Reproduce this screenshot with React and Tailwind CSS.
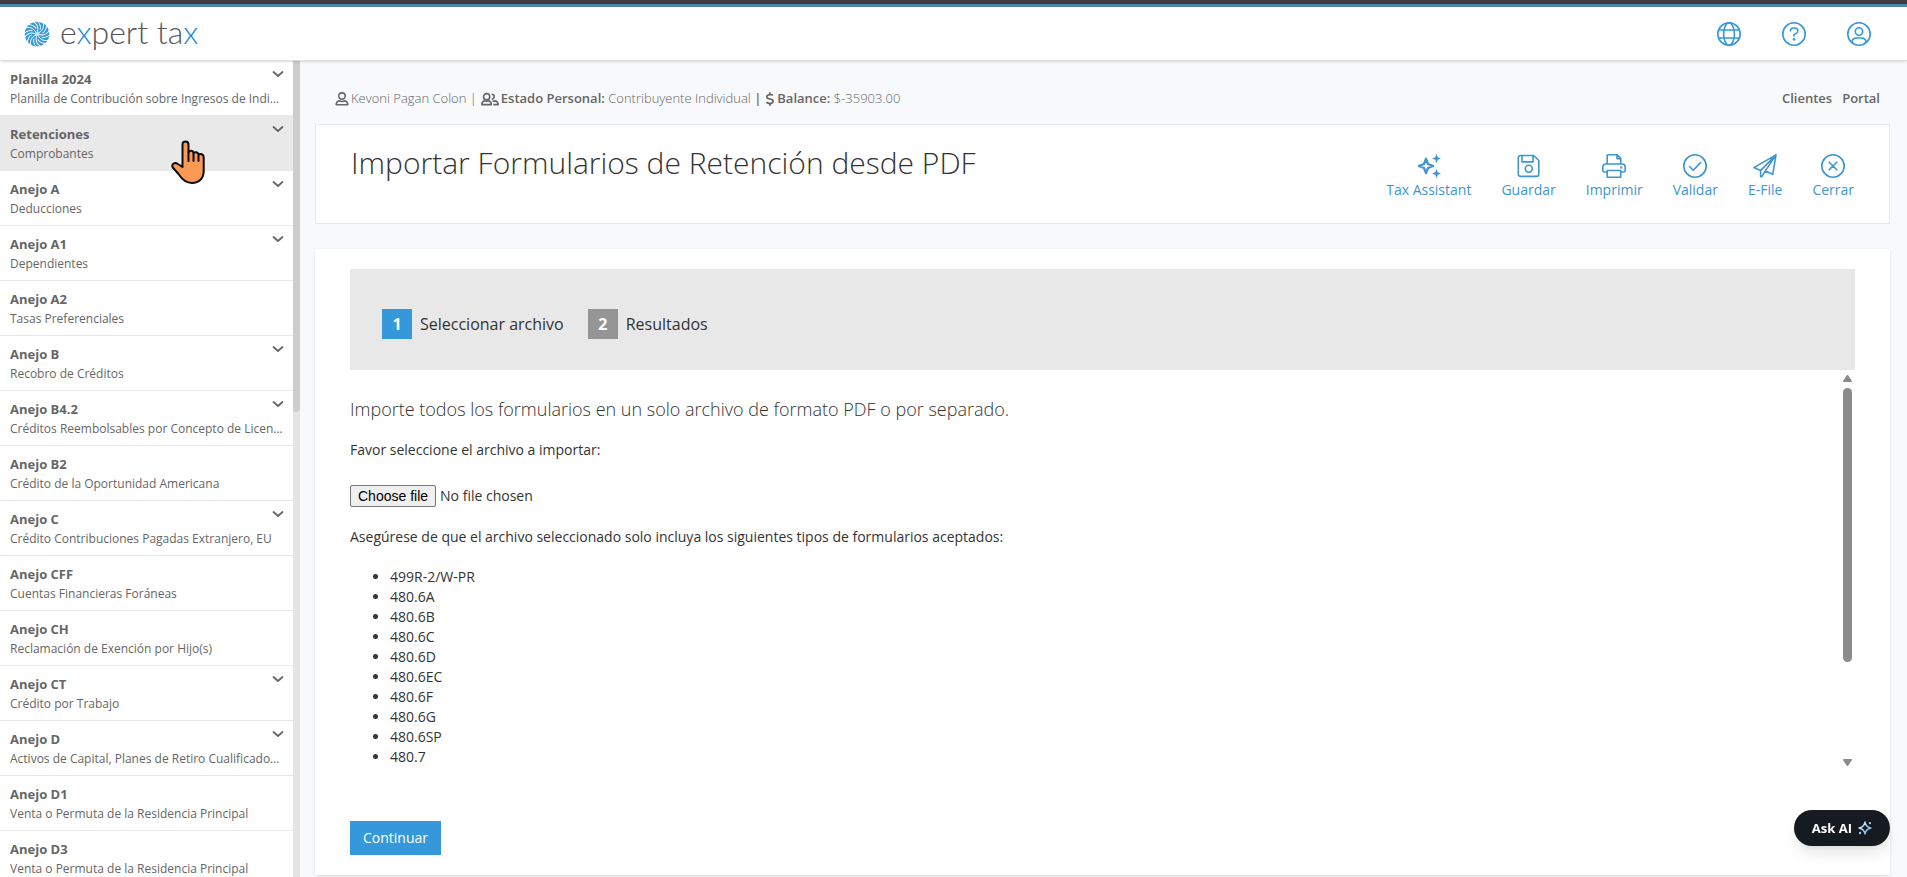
import React from "react";
import { FaDollarSign } from "react-icons/fa6";

const forms = [
  ["Planilla 2024", "Planilla de Contribución sobre Ingresos de Individuos", true],
  ["Retenciones", "Comprobantes", true],
  ["Anejo A", "Deducciones", true],
  ["Anejo A1", "Dependientes", true],
  ["Anejo A2", "Tasas Preferenciales", false],
  ["Anejo B", "Recobro de Créditos", true],
  ["Anejo B4.2", "Créditos Reembolsables por Concepto de Licencias", true],
  ["Anejo B2", "Crédito de la Oportunidad Americana", false],
  ["Anejo C", "Crédito Contribuciones Pagadas Extranjero, EU", true],
  ["Anejo CFF", "Cuentas Financieras Foráneas", false],
  ["Anejo CH", "Reclamación de Exención por Hijo(s)", false],
  ["Anejo CT", "Crédito por Trabajo", true],
  ["Anejo D", "Activos de Capital, Planes de Retiro Cualificados y otros", true],
  ["Anejo D1", "Venta o Permuta de la Residencia Principal", false],
  ["Anejo D3", "Venta o Permuta de la Residencia Principal", false],
];

const accepted = [
  "499R-2/W-PR", "480.6A", "480.6B", "480.6C", "480.6D",
  "480.6EC", "480.6F", "480.6G", "480.6SP", "480.7",
];

function Icon({ children, className = "size-6", width = 1.6 }) {
  return (
    <svg viewBox="0 0 24 24" className={className} fill="none" stroke="currentColor" strokeWidth={width} strokeLinecap="round" strokeLinejoin="round" aria-hidden="true">
      {children}
    </svg>
  );
}

const Globe = () => (
  <Icon>
    <circle cx="12" cy="12" r="11.2" />
    <ellipse cx="12" cy="12" rx="5.4" ry="11.2" />
    <path d="M1.8 8h20.4M1.8 16h20.4" />
  </Icon>
);
const Help = () => (
  <Icon>
    <circle cx="12" cy="12" r="11.2" />
    <path d="M8.3 8.800c.2-1.800 1.300-2.800 2.900-2.800h1.500c1.800 0 3.100 1.300 3.100 2.900 0 1.100-.5 1.900-1.500 2.500L12 12.700v1.300" />
    <circle cx="12" cy="17.300" r=".6" fill="currentColor" />
  </Icon>
);
const User = () => (
  <Icon>
    <circle cx="12" cy="12" r="11.2" />
    <circle cx="12" cy="9.500" r="3.700" />
    <path d="M4.800 20.300c.3-2.800 2.300-4.300 4.900-4.300h4.600c2.600 0 4.600 1.500 4.900 4.300" />
  </Icon>
);
const Sparkles = () => (
  <Icon width={2.3}>
    <path d="M9 4.800l2 5.200 5.200 2-5.200 2-2 5.200L7 14l-5.200-2L7 10z" />
    <path d="M19.500 0l1.300 3.200L24 4.500l-3.200 1.300L19.500 9l-1.300-3.200L15 4.500l3.200-1.300zM19.500 15l1.300 3.200 3.200 1.300-3.200 1.300-1.300 3.200-1.300-3.200-3.200-1.300 3.200-1.300z" fill="currentColor" stroke="none" />
  </Icon>
);
const Save = () => (
  <Icon>
    <path d="M3.500 1.500h13.200l5.100 5v13.700a2.200 2.200 0 0 1-2.200 2.200H3.500a2.200 2.200 0 0 1-2.200-2.200V3.700a2.200 2.200 0 0 1 2.200-2.200zM5 1.500v6.400h11V1.500" />
    <circle cx="11.800" cy="14.800" r="3.500" />
  </Icon>
);
const Print = () => (
  <Icon>
    <path d="M5.200 10V1.500A.8.8 0 0 1 6 .8h9.200l3.600 3.600V10M15 .8v3.800h3.800M5.200 18H2.400A1.600 1.600 0 0 1 .8 16.400V13a3 3 0 0 1 3-3h16.400a3 3 0 0 1 3 3v3.400a1.600 1.600 0 0 1-1.600 1.600h-2.800M5.200 16.500h13.600v6.700H5.200z" />
    <circle cx="19.300" cy="13.500" r=".4" fill="currentColor" />
  </Icon>
);
const Check = () => (
  <Icon>
    <circle cx="12" cy="12" r="11.2" />
    <path d="M6.500 12.500l3.800 3.700 7.200-7.600" />
  </Icon>
);
const Send = () => (
  <Icon>
    <path d="M23 .9L.9 13.600l6.700 3L23 .9l-3.300 19.400-7.500-3.200-3.600 5.800-1-.5v-5.800M23 .9L12.200 17.100" />
  </Icon>
);
const Close = () => (
  <Icon>
    <circle cx="12" cy="12" r="11.2" />
    <path d="M8.200 8.200l7.600 7.600M15.800 8.200l-7.600 7.600" />
  </Icon>
);

const actions = [
  ["Tax Assistant", Sparkles],
  ["Guardar", Save],
  ["Imprimir", Print],
  ["Validar", Check],
  ["E-File", Send],
  ["Cerrar", Close],
];

function AskSparkle() {
  return (
    <svg viewBox="0 0 24 24" className="size-3.5" fill="none" stroke="url(#ask-shade)" strokeWidth="2.4" strokeLinejoin="round" aria-hidden="true">
      <defs>
        <linearGradient id="ask-shade" x1="0" y1="0" x2="1" y2="1">
          <stop offset="0" stopColor="#f4f9ff" />
          <stop offset="1" stopColor="#5aa9f2" />
        </linearGradient>
      </defs>
      <path d="M12 1.800c1 6 3.200 8.700 10.200 10.200-7 1.500-9.200 4.200-10.200 10.200-1-6-3.200-8.700-10.200-10.200C8.800 10.500 11 7.800 12 1.800z" />
      <circle cx="20.500" cy="3.500" r="2" fill="#a9c4dd" stroke="none" />
      <circle cx="3.500" cy="20.500" r="2" fill="#a9c4dd" stroke="none" />
    </svg>
  );
}

function Logo() {
  const arms = Array.from({ length: 8 }, (_, i) => i * 45);
  return (
    <a href="#inicio" aria-label="expert tax" className="flex items-center gap-2.5">
      <svg viewBox="-13 -13 26 26" className="size-[26px]" fill="none" aria-hidden="true">
        <circle r="12.300" fill="#3498db" />
        {arms.map((a) => (
          <g key={a} transform={`rotate(${a})`} stroke="#ffffff" strokeWidth="1">
            <path d="M0 -.8C4 -1.500 8 -5.500 6 -12" />
            <path d="M3.200 -4.500C4 -7 3.200 -10 .5 -13" />
          </g>
        ))}
      </svg>
      <span className="pb-1 font-['Lato',sans-serif] text-[32px] leading-9 font-light text-[#55565a]">
        e<span className="text-[#2389d3]">x</span>pert ta<span className="text-[#2389d3]">x</span>
      </span>
    </a>
  );
}

function Hand() {
  return (
    <svg viewBox="0 0 34 44" className="pointer-events-none absolute top-6 left-[171px] h-11 w-[34px]" fill="#fb9a55" stroke="#0c0c0c" strokeWidth="2" strokeLinejoin="round" strokeLinecap="round" aria-hidden="true">
      <path d="M11.500 27V4.500c0-4 6-4 6 0V12c1.500-1.800 4.500-1.500 5 .8 1.500-1 4.500-.8 5 1.500 2-1 5.200 0 5.200 2.700V31c0 7.500-4.700 12-11.700 12-6 0-10-3.500-13.500-9L1.800 27.500c-1.800-3.500 2.200-5.700 5-3.500z" />
      <path d="M17.500 12v9M22.500 13v8M27.500 15v6" fill="none" />
    </svg>
  );
}

export default function App() {
  return (
    <div className="flex h-screen flex-col overflow-hidden bg-[#f8f9fb] font-['Open_Sans',sans-serif] text-sm text-[#333333]">
      <div className="h-1 shrink-0 bg-[#3d3d3d]" />
      <header className="z-10 flex h-[57px] shrink-0 items-center justify-between border-t-3 border-b border-t-[#4a86a8] border-b-[#dcdfe2] bg-white pr-9 pl-6 shadow-sm">
        <Logo />
        <nav className="flex items-center gap-[41px] text-[#3498db]">
          <button type="button" aria-label="Idioma"><Globe /></button>
          <button type="button" aria-label="Ayuda"><Help /></button>
          <button type="button" aria-label="Cuenta"><User /></button>
        </nav>
      </header>

      <div className="flex min-h-0 flex-1">
        <aside className="flex w-[300px] shrink-0 overflow-hidden bg-white">
          <nav className="min-w-0 flex-1 overflow-hidden">
            <ul>
              {forms.map(([title, sub, expandable], i) => (
                <li key={title} className={i === 1 ? "relative bg-[#e9e9e9]" : ""}>
                  <a href="#formulario" className="flex h-[55px] border-b border-[#e9e9e9] pt-[7px] pr-[9px] pl-2.5 text-[#666666]">
                    <span className="min-w-0 flex-1 pt-px">
                      <span className="block text-[13px] leading-5 font-bold">{title}</span>
                      <span className="block truncate text-xs leading-5">{sub}</span>
                    </span>
                    {expandable && (
                      <Icon className="-ml-3 size-3 shrink-0" width={3.5}><path d="M3 8l9 8 9-8" /></Icon>
                    )}
                  </a>
                  {i === 1 && <Hand />}
                </li>
              ))}
            </ul>
          </nav>
          <div className="w-[7px] shrink-0 bg-[#e4e4e4]">
            <div className="h-[43%] rounded-b bg-[#cdcdcd]" />
          </div>
        </aside>

        <main className="flex min-w-0 flex-1 flex-col pr-[17px] pb-0.5 pl-[15px]">
          <div className="flex h-[63px] shrink-0 items-center justify-between pt-3 pr-2.5 pl-5 text-[13px] text-[#666666]">
            <p className="flex items-center gap-0.5 font-light">
              <Icon className="size-3.5" width={2.6}><circle cx="12" cy="7" r="5.500" /><path d="M2 22c0-4 2-6 5-7 3 1.500 7 1.500 10 0 3 1 5 3 5 7z" /></Icon>
              <span>Kevoni Pagan Colon |</span>
              <svg viewBox="0 0 32 24" className="ml-0.5 h-3.5 w-[18px]" fill="none" stroke="currentColor" strokeWidth="2.800" strokeLinejoin="round" aria-hidden="true">
                <circle cx="10" cy="8" r="5.500" /><path d="M1.500 22c0-4 2-6 4.500-7 2.500 1.500 5.500 1.500 8 0 2.500 1 4.500 3 4.500 7zM19 3.500a4.500 4.500 0 1 1 0 9M22 22h8.500c0-4-1.500-6-4.500-7-2 1-3.500 1-5.500.5" />
              </svg>
              <span><b className="font-semibold">Estado Personal:</b> Contribuyente Individual <b className="font-semibold">|</b></span>
              <FaDollarSign className="ml-0.5 h-3.5 w-2.5" aria-hidden="true" />
              <span><b className="font-semibold">Balance:</b> $-35903.00</span>
            </p>
            <nav className="flex gap-2.5 font-semibold">
              <a href="#clientes">Clientes</a>
              <a href="#portal">Portal</a>
            </nav>
          </div>

          <section className="flex h-[100px] shrink-0 justify-between border border-[#e9e9e9] bg-white pr-[35px] pl-[35px]">
            <h1 className="pt-[18px] text-3xl leading-10 font-light">Importar Formularios de Retención desde PDF</h1>
            <div className="flex gap-[30px] pt-[29px] text-[#3d96cf]">
              {actions.map(([label, Glyph]) => (
                <button key={label} type="button" className="flex flex-col items-center text-sm leading-6">
                  <Glyph />
                  <span>{label}</span>
                </button>
              ))}
            </div>
          </section>

          <section className="mt-[25px] flex min-h-0 flex-1 flex-col bg-white px-[35px] pt-5 pb-5 shadow-sm">
            <ol className="flex h-[101px] shrink-0 items-center gap-6 bg-[#e8e8e8] px-8 pt-2 text-base">
              <li className="flex items-center gap-2"><span className="flex size-[30px] items-center justify-center bg-[#3498db] font-bold text-white">1</span>Seleccionar archivo</li>
              <li className="flex items-center gap-2"><span className="flex size-[30px] items-center justify-center bg-[#959595] font-bold text-white">2</span>Resultados</li>
            </ol>
            <div className="flex min-h-0 flex-1">
              <div className="min-w-0 flex-1 overflow-hidden pt-[27px]">
                <h2 className="text-lg leading-6 font-light">Importe todos los formularios en un solo archivo de formato PDF o por separado.</h2>
                <p className="mt-[19px] leading-5">Favor seleccione el archivo a importar:</p>
                <div className="mt-[25px] flex items-center gap-1">
                  <input id="archivo" type="file" accept="application/pdf" className="sr-only" />
                  <label htmlFor="archivo" className="rounded-xs border border-[#767676] bg-[#efefef] px-[7px] font-['Liberation_Sans',sans-serif] text-sm leading-5 text-black">Choose file</label>
                  <span>No file chosen</span>
                </div>
                <p className="mt-5 leading-5">Asegúrese de que el archivo seleccionado solo incluya los siguientes tipos de formularios aceptados:</p>
                <ul className="mt-5 list-disc pl-10 leading-5">
                  {accepted.map((f) => <li key={f}>{f}</li>)}
                </ul>
              </div>
              <div className="flex w-[15px] shrink-0 flex-col items-center py-[5px] text-[#8b8b8b]">
                <svg viewBox="0 0 9 7" className="h-[7px] w-[9px]" fill="currentColor" aria-hidden="true"><path d="M3.500 .700a1.200 1.200 0 0 1 2 0L9 6q0 1-1 1H1q-1 0-1-1z" /></svg>
                <div className="my-1.5 min-h-0 w-full flex-1"><div className="mx-auto h-3/4 w-[9px] rounded-full bg-[#8b8b8b]" /></div>
                <svg viewBox="0 0 9 7" className="h-[7px] w-[9px]" fill="currentColor" aria-hidden="true"><path d="M3.500 6.300a1.200 1.200 0 0 0 2 0L9 1q0-1-1-1H1q-1 0-1 1z" /></svg>
              </div>
            </div>
            <button type="button" className="mt-[50px] h-[34px] shrink-0 self-start bg-[#3498db] px-[13px] text-sm text-white">Continuar</button>
          </section>
        </main>
      </div>

      <button type="button" className="fixed right-[17px] bottom-[31px] z-20 flex h-9 items-center gap-1.5 rounded-full bg-[#161b22] px-[18px] text-[13px] font-bold text-white shadow-lg">
        Ask AI
        <AskSparkle />
      </button>
    </div>
  );
}
